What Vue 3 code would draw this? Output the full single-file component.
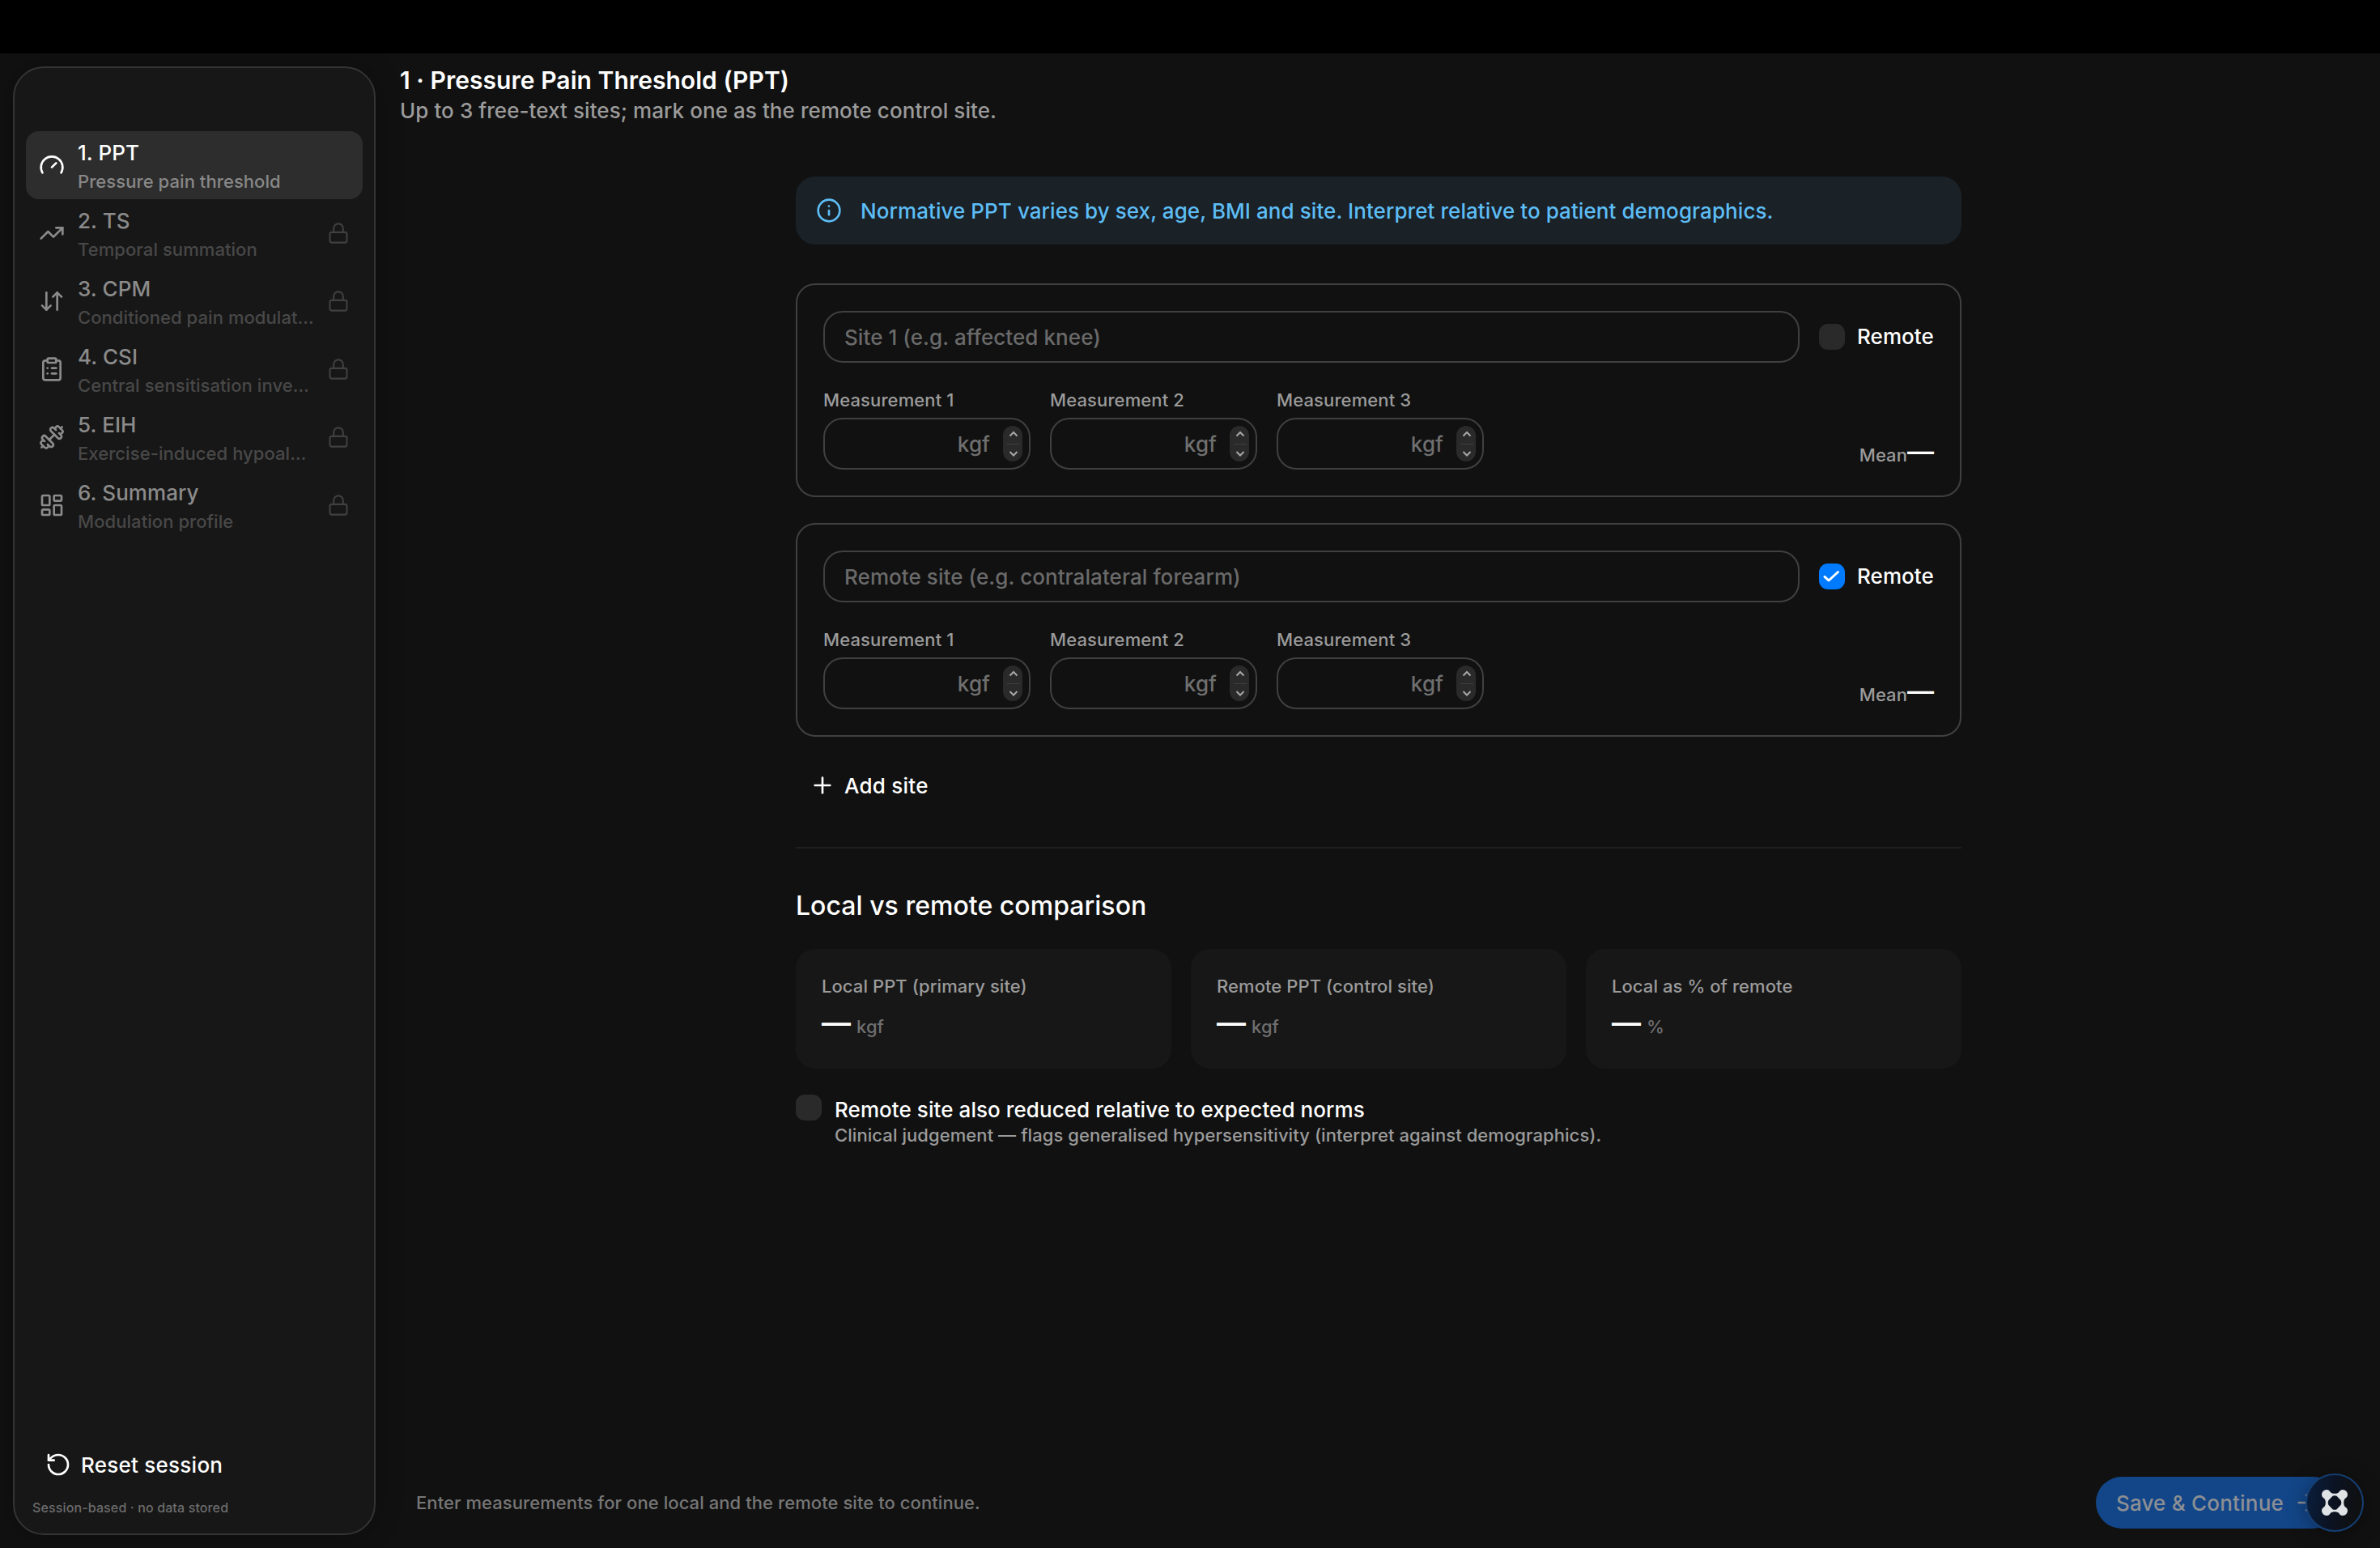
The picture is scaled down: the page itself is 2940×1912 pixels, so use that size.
<template>
  <div class="app">
    <div class="titlebar"></div>
    <div class="shell">
      <aside class="sidebar">
        <nav class="steps">
          <div
            v-for="step in steps"
            :key="step.title"
            :class="['step', step.locked ? 'step--locked' : 'step--active']"
          >
            <svg class="icon" viewBox="0 0 24 24">
              <path v-for="d in step.icon" :key="d" :d="d" />
            </svg>
            <div class="step__text">
              <div class="step__title">{{ step.title }}</div>
              <div class="step__sub">{{ step.sub }}</div>
            </div>
            <svg v-if="step.locked" class="icon step__lock" viewBox="0 0 24 24">
              <rect x="3" y="11" width="18" height="11" rx="2" />
              <path d="M7 11V7a5 5 0 0 1 10 0v4" />
            </svg>
          </div>
        </nav>
        <button class="ghost ghost--reset" type="button">
          <svg class="icon" viewBox="0 0 24 24">
            <path d="M3 12a9 9 0 1 0 9-9 9.75 9.75 0 0 0-6.74 2.74L3 8" />
            <path d="M3 3v5h5" />
          </svg>
          Reset session
        </button>
        <p class="sidebar__note">Session-based · no data stored</p>
      </aside>

      <main class="main">
        <header class="header">
          <h1>1 · Pressure Pain Threshold (PPT)</h1>
          <p>Up to 3 free-text sites; mark one as the remote control site.</p>
        </header>

        <div class="content">
          <div class="banner">
            <svg class="icon" viewBox="0 0 24 24">
              <circle cx="12" cy="12" r="10" />
              <path d="M12 16v-4" />
              <path d="M12 8h.01" />
            </svg>
            <span>Normative PPT varies by sex, age, BMI and site. Interpret relative to patient demographics.</span>
          </div>

          <section v-for="site in sites" :key="site.placeholder" class="site">
            <div class="site__top">
              <input v-model="site.name" class="field site__name" type="text" :placeholder="site.placeholder" />
              <label class="check" @click.prevent="site.remote = !site.remote">
                <span :class="['box', site.remote ? 'box--on' : '']">
                  <svg v-if="site.remote" viewBox="0 0 32 32"><path d="M7 16.3l5 4.7L23.5 10.5" /></svg>
                </span>
                <span class="check__label">Remote</span>
              </label>
            </div>
            <div class="site__bottom">
              <div v-for="n in 3" :key="n" class="measure">
                <div class="measure__label">Measurement {{ n }}</div>
                <div class="field measure__field">
                  <span class="unit">kgf</span>
                  <span class="stepper">
                    <svg viewBox="0 0 24 44">
                      <path d="M8.5 12.5l4.5-4.5 4.5 4.5" />
                      <path class="stepper__line" d="M5 22.5h16" />
                      <path d="M8.5 32l4.5 4.5 4.5-4.5" />
                    </svg>
                  </span>
                </div>
              </div>
              <div class="mean">Mean<span class="dash dash--small">—</span></div>
            </div>
          </section>

          <button class="ghost ghost--add" type="button">
            <svg class="icon" viewBox="0 0 24 24"><path d="M5 12h14" /><path d="M12 5v14" /></svg>
            Add site
          </button>

          <hr class="divider" />

          <h2>Local vs remote comparison</h2>

          <div class="stats">
            <div v-for="stat in stats" :key="stat.label" class="stat">
              <div class="stat__label">{{ stat.label }}</div>
              <div class="stat__value"><span class="dash">—</span>{{ stat.unit }}</div>
            </div>
          </div>

          <label class="flag">
            <span class="box"></span>
            <span class="flag__text">
              <span class="flag__title">Remote site also reduced relative to expected norms</span>
              <span class="flag__sub">Clinical judgement — flags generalised hypersensitivity (interpret against demographics).</span>
            </span>
          </label>
        </div>

        <footer class="footer">
          <span class="footer__hint">Enter measurements for one local and the remote site to continue.</span>
          <button class="save" type="button">
            Save &amp; Continue
            <svg class="icon" viewBox="0 0 24 24"><path d="M5 12h14" /><path d="m12 5 7 7-7 7" /></svg>
          </button>
        </footer>
      </main>
    </div>

    <div class="bubble">
      <svg viewBox="0 0 32 32">
        <path
          fill-rule="evenodd"
          d="M6 0C9 0 10 2 11 3.3C13 5.3 19 5.3 21 3.3C22 2 23 0 26 0A6 6 0 0 1 32 6C32 9 30 10 28.7 11C26.7 13 26.7 19 28.7 21C30 22 32 23 32 26A6 6 0 0 1 26 32C23 32 22 30 21 28.7C19 26.7 13 26.7 11 28.7C10 30 9 32 6 32A6 6 0 0 1 0 26C0 23 2 22 3.3 21C5.3 19 5.3 13 3.3 11C2 10 0 9 0 6A6 6 0 0 1 6 0ZM13.5 7.8L8.3 13.3Q7 16 8.3 18.7L13.5 24.2Q16 25.2 18.5 24.2L23.7 18.7Q25 16 23.7 13.3L18.5 7.8Q16 6.8 13.5 7.8Z"
        />
      </svg>
    </div>
  </div>
</template>

<script setup>
import { reactive } from 'vue';

const steps = [
  {
    title: '1. PPT',
    sub: 'Pressure pain threshold',
    locked: false,
    icon: ['m12 14 4-4', 'M3.34 19a10 10 0 1 1 17.32 0'],
  },
  {
    title: '2. TS',
    sub: 'Temporal summation',
    locked: true,
    icon: ['M16 7h6v6', 'm22 7-8.5 8.5-5-5L2 17'],
  },
  {
    title: '3. CPM',
    sub: 'Conditioned pain modulat…',
    locked: true,
    icon: ['m3 16 4 4 4-4', 'M7 20V4', 'm21 8-4-4-4 4', 'M17 4v16'],
  },
  {
    title: '4. CSI',
    sub: 'Central sensitisation inve…',
    locked: true,
    icon: [
      'M9 2h6a1 1 0 0 1 1 1v2a1 1 0 0 1-1 1H9a1 1 0 0 1-1-1V3a1 1 0 0 1 1-1z',
      'M16 4h2a2 2 0 0 1 2 2v14a2 2 0 0 1-2 2H6a2 2 0 0 1-2-2V6a2 2 0 0 1 2-2h2',
      'M12 11h4',
      'M12 16h4',
      'M8 11h.01',
      'M8 16h.01',
    ],
  },
  {
    title: '5. EIH',
    sub: 'Exercise-induced hypoal…',
    locked: true,
    icon: [
      'M17.596 12.768a2 2 0 1 0 2.829-2.829l-1.768-1.767a2 2 0 0 0 2.828-2.829l-2.828-2.828a2 2 0 0 0-2.829 2.828l-1.767-1.768a2 2 0 1 0-2.829 2.829z',
      'm2.5 21.5 1.4-1.4',
      'm20.1 3.9 1.4-1.4',
      'M5.343 21.485a2 2 0 1 0 2.829-2.828l1.767 1.768a2 2 0 1 0 2.829-2.829l-6.364-6.364a2 2 0 1 0-2.829 2.829l1.768 1.767a2 2 0 0 0-2.828 2.829z',
      'm9.6 14.4 4.8-4.8',
    ],
  },
  {
    title: '6. Summary',
    sub: 'Modulation profile',
    locked: true,
    icon: [
      'M4 3h5a1 1 0 0 1 1 1v7a1 1 0 0 1-1 1H4a1 1 0 0 1-1-1V4a1 1 0 0 1 1-1z',
      'M15 3h5a1 1 0 0 1 1 1v3a1 1 0 0 1-1 1h-5a1 1 0 0 1-1-1V4a1 1 0 0 1 1-1z',
      'M15 12h5a1 1 0 0 1 1 1v7a1 1 0 0 1-1 1h-5a1 1 0 0 1-1-1v-7a1 1 0 0 1 1-1z',
      'M4 16h5a1 1 0 0 1 1 1v3a1 1 0 0 1-1 1H4a1 1 0 0 1-1-1v-3a1 1 0 0 1 1-1z',
    ],
  },
];

const sites = reactive([
  { name: '', placeholder: 'Site 1 (e.g. affected knee)', remote: false },
  { name: '', placeholder: 'Remote site (e.g. contralateral forearm)', remote: true },
]);

const stats = [
  { label: 'Local PPT (primary site)', unit: 'kgf' },
  { label: 'Remote PPT (control site)', unit: 'kgf' },
  { label: 'Local as % of remote', unit: '%' },
];
</script>

<style>
body {
  margin: 0;
  background: #111111;
}
</style>

<style scoped>
.app {
  height: 1912px;
  display: flex;
  flex-direction: column;
  background: #111111;
  color: #ffffff;
  font-family: Inter, "Liberation Sans", sans-serif;
  font-size: 26px;
  font-weight: 450;
  letter-spacing: 0.07px;
  overflow: hidden;
}

.app * {
  box-sizing: border-box;
}

.titlebar {
  height: 66px;
  background: #000000;
}

.shell {
  flex: 1;
  display: flex;
  min-height: 0;
}

.icon {
  width: 32px;
  height: 32px;
  flex: none;
  fill: none;
  stroke: currentColor;
  stroke-width: 2;
  stroke-linecap: round;
  stroke-linejoin: round;
}

.sidebar {
  width: 448px;
  margin: 16px 0 16px 16px;
  padding: 78px 14px 0;
  display: flex;
  flex-direction: column;
  background: #171717;
  border: 2px solid #343434;
  border-radius: 38px;
  box-shadow: 0 0 32px rgba(0, 0, 0, 0.3);
}

.steps {
  flex: 1;
}

.step {
  height: 84px;
  padding: 0 16px;
  display: flex;
  align-items: center;
  gap: 16px;
  border-radius: 16px;
}

.step--active {
  background: #2d2d2d;
}

.step--locked {
  color: #8b8b8b;
}

.step__text {
  flex: 1;
  min-width: 0;
}

.step__title {
  line-height: 39px;
}

.step__sub {
  font-size: 22px;
  line-height: 32px;
  color: #888888;
  white-space: nowrap;
}

.step--locked .step__sub {
  color: #484848;
}

.step__lock {
  width: 28px;
  height: 28px;
  color: #404040;
  stroke-width: 1.8;
}

.ghost {
  align-self: flex-start;
  height: 64px;
  padding: 0 24px;
  display: flex;
  align-items: center;
  gap: 11px;
  border: 0;
  background: transparent;
  color: inherit;
  font: inherit;
  font-weight: 500;
  letter-spacing: 0.25px;
}

.ghost--reset {
  gap: 12px;
}

.sidebar__note {
  margin: 9px 8px 20px;
  font-size: 16px;
  line-height: 24px;
  letter-spacing: 0.13px;
  color: #6c6c6c;
}

.main {
  flex: 1;
  display: flex;
  flex-direction: column;
  padding-left: 30px;
}

.header {
  height: 152px;
  padding-top: 15px;
}

.header h1 {
  margin: 0;
  font-size: 30px;
  line-height: 36px;
  font-weight: 600;
  letter-spacing: 0.05px;
}

.header p {
  margin: 0;
  line-height: 40px;
  color: #9b9b9b;
}

.content {
  flex: 1;
  width: 1440px;
  margin-left: 489px;
  display: flex;
  flex-direction: column;
}

.banner {
  height: 84px;
  padding-left: 25px;
  display: flex;
  align-items: center;
  gap: 23px;
  border-radius: 24px;
  background: #1a2127;
  color: #5dbdf5;
  margin-bottom: 48px;
}

.site {
  height: 264px;
  margin-bottom: 32px;
  padding: 32px;
  border: 2px solid #404040;
  border-radius: 24px;
}

.site__top,
.site__bottom {
  display: flex;
  gap: 24px;
}

.site__top {
  margin-bottom: 32px;
}

.field {
  height: 64px;
  border: 2px solid #404040;
  border-radius: 24px;
  background: transparent;
}

.site__name {
  flex: 1;
  padding: 0 24px;
  color: inherit;
  font: inherit;
  letter-spacing: inherit;
  outline: none;
}

.site__name::placeholder {
  color: #6a6a6a;
  opacity: 1;
}

.check {
  display: flex;
  align-items: center;
  gap: 15px;
}

.check__label {
  width: 95px;
  padding-bottom: 2px;
}

.box {
  width: 32px;
  height: 32px;
  flex: none;
  display: block;
  border-radius: 11px;
  background: #2a2a2a;
}

.box--on {
  background: #007aff;
}

.box svg {
  display: block;
  fill: none;
  stroke: #ffffff;
  stroke-width: 3;
  stroke-linecap: round;
  stroke-linejoin: round;
}

.measure {
  width: 256px;
}

.measure__label {
  margin-bottom: 8px;
  font-size: 22px;
  line-height: 28px;
  letter-spacing: 0.12px;
  color: #9b9b9b;
}

.measure__field {
  display: flex;
  align-items: center;
  justify-content: flex-end;
  gap: 16px;
  padding-right: 8px;
}

.unit {
  color: #6f6f6f;
}

.stepper {
  width: 24px;
  height: 44px;
  border-radius: 12px;
  background: #2a2a2a;
}

.stepper svg {
  display: block;
  fill: none;
  stroke: #a8a8a8;
  stroke-width: 2;
}

.stepper .stepper__line {
  stroke: #404040;
  stroke-width: 1;
}

.mean {
  margin-left: auto;
  align-self: flex-end;
  display: flex;
  align-items: center;
  height: 37px;
  font-size: 22px;
  color: #9b9b9b;
}

.dash {
  padding-bottom: 10px;
  color: #ffffff;
  font-family: "Liberation Sans", sans-serif;
  font-size: 36px;
  font-weight: 700;
  line-height: 1;
  letter-spacing: 0;
}

.dash--small {
  font-size: 33px;
}

.ghost--add {
  padding-left: 17px;
  margin-top: -4px;
}

.divider {
  width: 100%;
  height: 2px;
  margin: 44px 0 51px;
  border: 0;
  background: #1f1f1f;
}

h2 {
  margin: 0 0 33px;
  font-size: 32px;
  line-height: 40px;
  font-weight: 500;
  letter-spacing: 0.03px;
}

.stats {
  display: flex;
  gap: 24px;
  margin-bottom: 32px;
}

.stat {
  flex: 1;
  height: 148px;
  padding: 30px 32px;
  border-radius: 24px;
  background: #171717;
  font-size: 22px;
}

.stat__label {
  line-height: 32px;
  color: #9b9b9b;
}

.stat__value {
  display: flex;
  align-items: center;
  gap: 7px;
  height: 40px;
  margin-top: 14px;
  color: #6f6f6f;
}

.flag {
  display: flex;
  gap: 16px;
}

.flag__text {
  display: flex;
  flex-direction: column;
  padding-top: 2px;
}

.flag__title {
  line-height: 34px;
}

.flag__sub {
  font-size: 22px;
  line-height: 28px;
  color: #9b9b9b;
}

.footer {
  height: 64px;
  margin: 0 51px 24px 20px;
  display: flex;
  align-items: center;
  justify-content: space-between;
}

.footer__hint {
  font-size: 22px;
  color: #777777;
}

.save {
  height: 64px;
  padding: 0 24px 0 25px;
  display: flex;
  align-items: center;
  gap: 12px;
  border: 0;
  border-radius: 32px;
  background: #134688;
  color: #8c8f94;
  font: inherit;
  font-weight: 500;
  letter-spacing: 0.2px;
}

/* floating assistant button, sits over the footer */
.bubble {
  position: absolute;
  left: 2848px;
  top: 1820px;
  width: 72px;
  height: 72px;
  display: flex;
  align-items: center;
  justify-content: center;
  border: 2px solid #153f73;
  border-radius: 50%;
  background: linear-gradient(100deg, #0a1c38 10%, #0b1220 50%, #0f1012 85%);
  box-shadow: 0 4px 24px rgba(0, 0, 0, 0.35);
}

.bubble svg {
  width: 32px;
  height: 32px;
  fill: #dfe3e6;
}
</style>
